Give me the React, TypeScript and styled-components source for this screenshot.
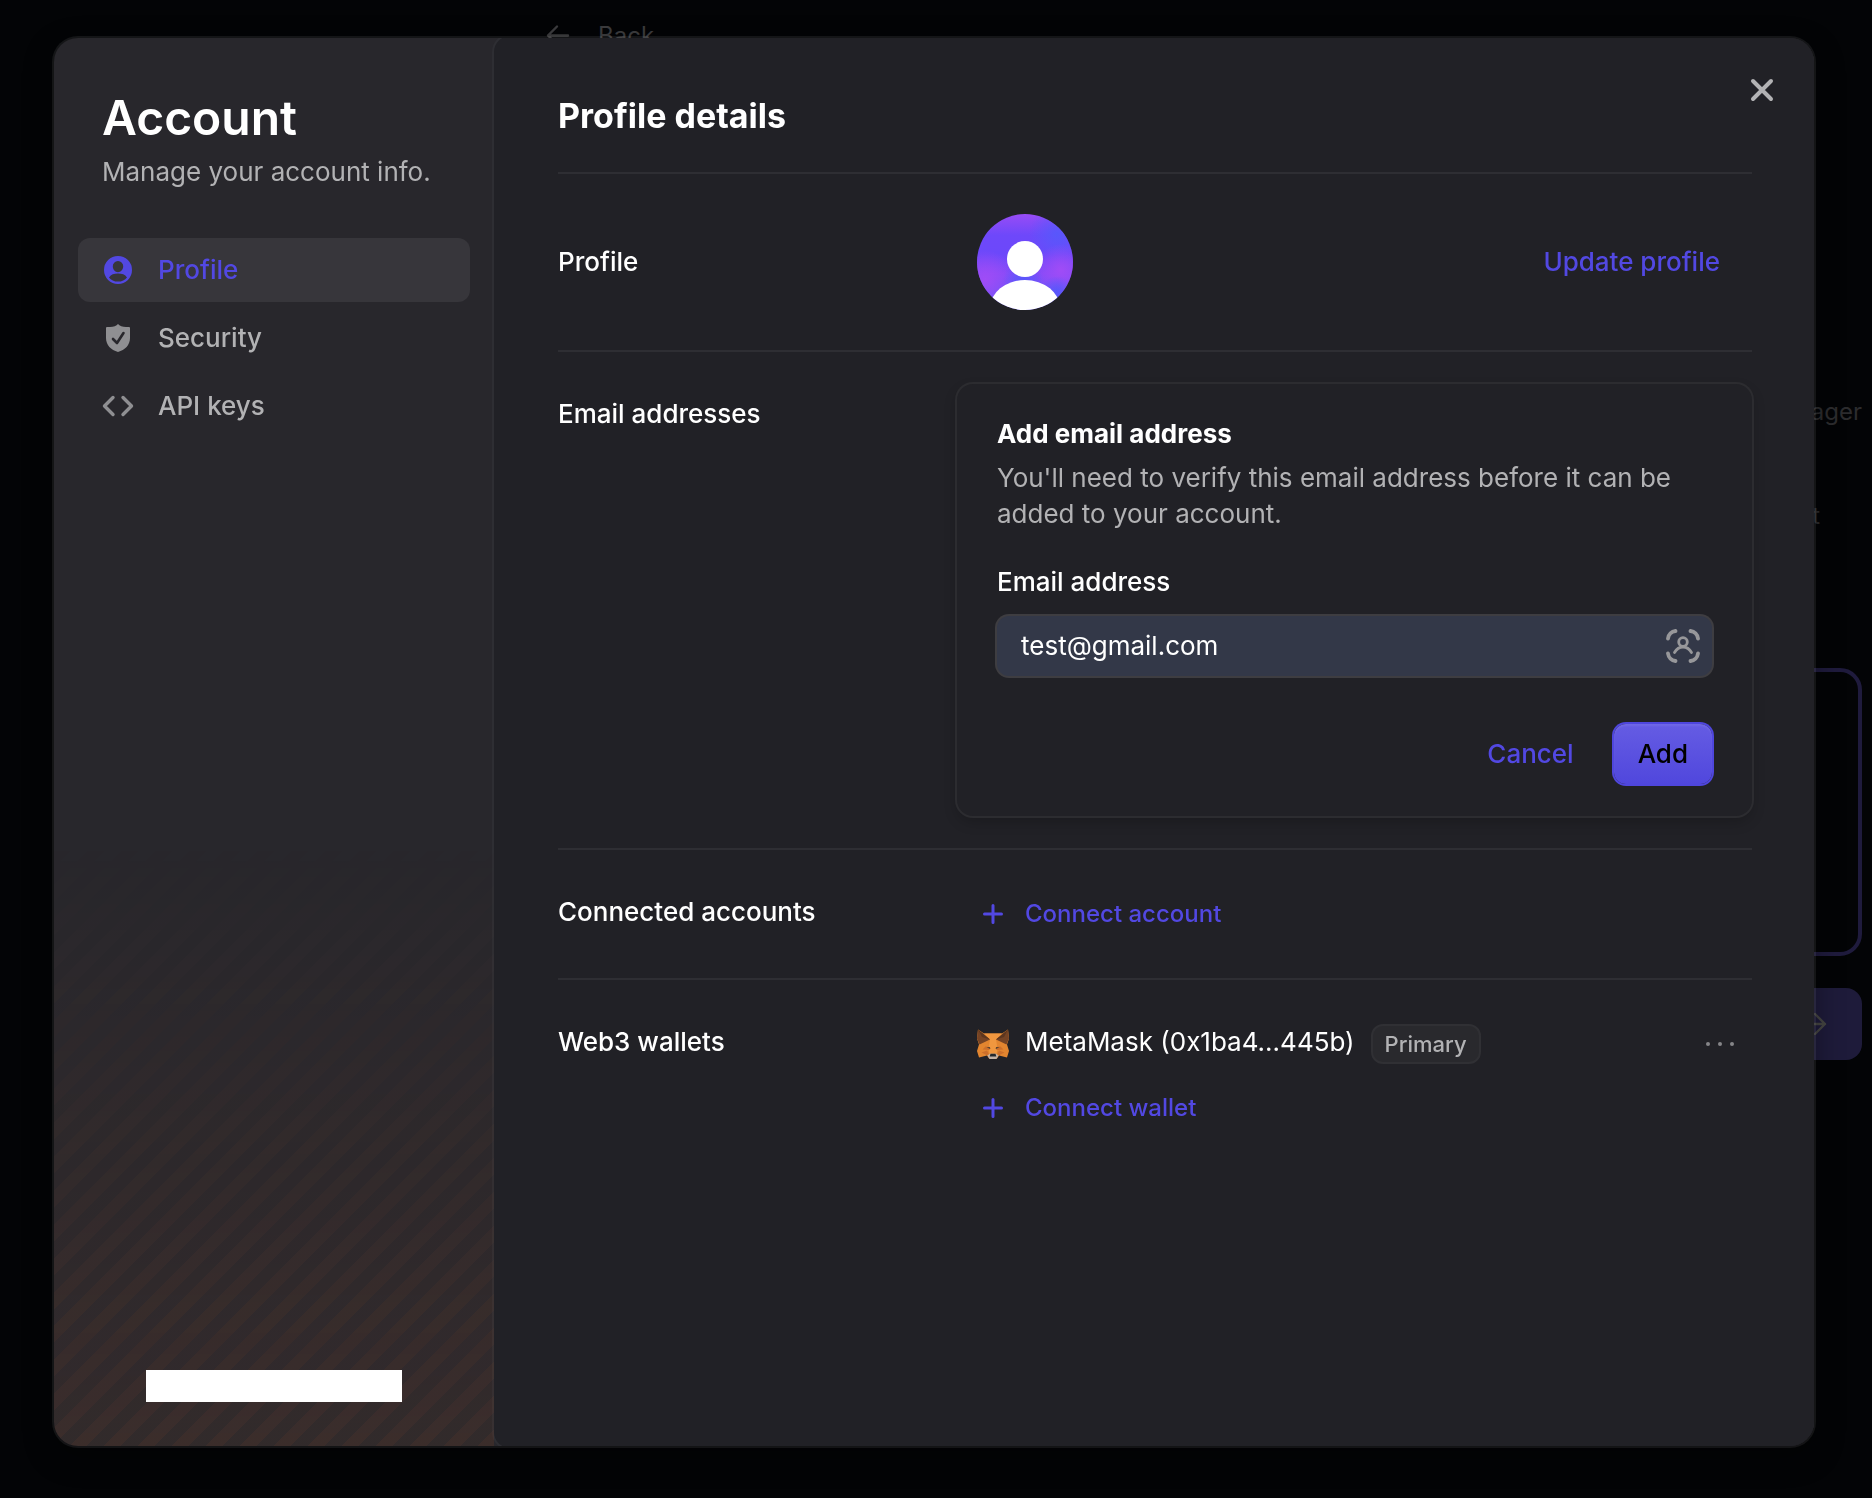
import React from "react";
import styled, { createGlobalStyle } from "styled-components";

const accent = "#5248e2";
const surface = "#212126";
const hairline = "#2e2e33";
const muted = "#b2b2b4";

const GlobalStyle = createGlobalStyle`
  *, *::before, *::after { box-sizing: border-box; }
  body {
    margin: 0;
    background: #030406;
    color: #ffffff;
    font-family: Inter, "Liberation Sans", sans-serif;
    font-optical-sizing: none;
    font-size: 26px;
    line-height: 36px;
  }
  button, input { font: inherit; }
  h1, h2, h3, p { margin: 0; }
`;

/* ---------- dimmed page behind the dialog ---------- */

const Page = styled.main`
  display: flex;
  flex-direction: column;
  min-height: 100vh;
  padding: 18px 10px 0 544px;
  color: #2c2c2e;
  overflow: hidden;
`;

const BackLink = styled.a`
  display: flex;
  align-items: center;
  gap: 26px;
  height: 36px;
  color: #3c3c3e;
  font-size: 24px;
  text-decoration: none;
`;

const PageHeading = styled.p`
  margin-top: 340px;
  font-size: 24px;
  text-align: right;
`;

const PageNote = styled.p`
  margin-top: 68px;
  padding-right: 42px;
  font-size: 24px;
  text-align: right;
`;

const Prompt = styled.textarea`
  height: 288px;
  margin-top: 134px;
  border: 4px solid #1f1b3d;
  border-radius: 22px;
  background: transparent;
  resize: none;
`;

const Send = styled.button`
  display: flex;
  align-items: center;
  justify-content: center;
  align-self: flex-end;
  width: 96px;
  height: 72px;
  margin-top: 32px;
  border: 0;
  border-radius: 16px;
  background: #1e1b3a;
  color: #454542;
`;

/* ---------- dialog shell ---------- */

const Overlay = styled.div`
  position: fixed;
  inset: 0;
  display: flex;
  padding: 38px 58px 52px 54px;
`;

const Dialog = styled.section`
  position: relative;
  display: flex;
  flex: 1;
  min-width: 0;
  border-radius: 24px;
  background: #28272c;
  box-shadow: 0 0 0 2px rgba(255, 255, 255, 0.07), 0 10px 30px rgba(0, 0, 0, 0.4);
`;

const Sidebar = styled.aside`
  position: relative;
  display: flex;
  flex: 0 0 440px;
  flex-direction: column;
  align-items: stretch;
  padding: 48px 24px 44px;
  border-radius: 24px 0 0 24px;
  overflow: hidden;

  &::before {
    content: "";
    position: absolute;
    inset: auto 0 0;
    height: 640px;
    background: repeating-linear-gradient(
      -45deg,
      rgba(243, 107, 38, 0.095),
      rgba(243, 107, 38, 0.095) 12px,
      rgba(243, 107, 38, 0.05) 12px,
      rgba(243, 107, 38, 0.05) 24px
    );
    mask-image: linear-gradient(transparent 5%, #000);
  }
`;

const SidebarTitle = styled.h1`
  padding: 0 24px;
  font-size: 48px;
  font-weight: 600;
  line-height: 64px;
`;

const SidebarText = styled.p`
  margin-top: 4px;
  padding: 0 24px;
  color: ${muted};
`;

const Nav = styled.nav`
  display: flex;
  flex-direction: column;
  gap: 4px;
  margin-top: 48px;
`;

const NavButton = styled.button<{ $active?: boolean }>`
  display: flex;
  align-items: center;
  gap: 24px;
  height: 64px;
  padding: 0 24px;
  border: 0;
  border-radius: 12px;
  background: ${(p) => (p.$active ? "#37363b" : "transparent")};
  color: ${(p) => (p.$active ? accent : muted)};
  font-weight: 500;

  svg { opacity: ${(p) => (p.$active ? 1 : 0.75)}; }
`;

const Redacted = styled.div`
  position: relative;
  align-self: center;
  width: 256px;
  height: 32px;
  margin-top: auto;
  background: #ffffff;
`;

const PanelClip = styled.div`
  display: flex;
  flex: 1;
  min-width: 0;
  margin-left: -2px;
  padding-left: 2px;
  border-radius: 0 24px 24px 0;
  overflow: hidden;
`;

const Panel = styled.div`
  flex: 1;
  min-width: 0;
  margin: -2px 0;
  padding: 56px 62px 40px 64px;
  border-radius: 16px 0 0 16px;
  background: ${surface};
  box-shadow: 0 0 0 2px ${hairline};
`;

const PanelTitle = styled.h2`
  padding-bottom: 32px;
  font-size: 34px;
  font-weight: 700;
  line-height: 48px;
`;

const CloseButton = styled.button`
  position: absolute;
  top: 20px;
  right: 20px;
  display: flex;
  align-items: center;
  justify-content: center;
  width: 64px;
  height: 64px;
  padding: 0;
  border: 0;
  background: transparent;
  color: ${muted};
`;

/* ---------- settings rows ---------- */

const Row = styled.section<{ $roomy?: boolean }>`
  display: grid;
  grid-template-columns: 399px minmax(0, 1fr);
  align-items: ${(p) => (p.$roomy ? "center" : "start")};
  padding: ${(p) => (p.$roomy ? "40px" : "32px")} 0;
  border-top: 2px solid ${hairline};
`;

const RowLabel = styled.h3<{ $centered?: boolean }>`
  padding-top: ${(p) => (p.$centered ? "0" : "12px")};
  font-size: 26px;
  font-weight: 500;
`;

const RowBody = styled.div`
  display: flex;
  flex-direction: column;
  padding-left: 20px;
`;

const ProfileLine = styled.div`
  display: flex;
  align-items: center;
  justify-content: space-between;
`;

const TextButton = styled.button`
  height: 60px;
  padding: 0 32px;
  border: 0;
  background: transparent;
  color: ${accent};
  font-weight: 500;
`;

const ConnectButton = styled.button`
  display: flex;
  align-items: center;
  align-self: flex-start;
  gap: 16px;
  height: 64px;
  padding: 0;
  border: 0;
  background: transparent;
  color: ${accent};
  font-size: 24px;
  font-weight: 500;
`;

const Card = styled.form`
  display: flex;
  flex-direction: column;
  padding: 32px 40px;
  border-radius: 16px;
  background: ${surface};
  box-shadow: 0 0 0 2px #2c2c30, 0 6px 14px rgba(0, 0, 0, 0.2);
`;

const CardTitle = styled.h3`
  font-size: 26px;
  font-weight: 700;
`;

const CardText = styled.p`
  margin-top: 8px;
  color: ${muted};
`;

const FieldLabel = styled.label`
  margin-top: 32px;
  font-weight: 500;
`;

const Field = styled.div`
  display: flex;
  align-items: center;
  height: 60px;
  margin-top: 16px;
  padding: 0 12px 0 24px;
  border-radius: 12px;
  background: #333848;
  color: #97979a;
  box-shadow: 0 0 0 2px #3e3d41;
`;

const FieldInput = styled.input`
  flex: 1;
  min-width: 0;
  padding: 0;
  border: 0;
  outline: 0;
  background: transparent;
  color: #ffffff;
`;

const Actions = styled.div`
  display: flex;
  justify-content: flex-end;
  gap: 8px;
  margin-top: 48px;
`;

const PrimaryButton = styled.button`
  height: 60px;
  padding: 0 24px;
  border: 0;
  border-radius: 12px;
  background: linear-gradient(#655ce3, #5047dd);
  box-shadow: 0 0 0 2px #4f46dd, inset 0 2px 2px rgba(255, 255, 255, 0.08);
  color: #000000;
  font-weight: 500;
`;

const WalletLine = styled.div`
  display: flex;
  align-items: flex-start;
  gap: 16px;
  height: 64px;
  padding-top: 12px;
`;

const WalletIcon = styled.span`
  display: flex;
  align-items: center;
  height: 40px;
`;

const Badge = styled.span`
  padding: 0 12px;
  border: 2px solid #303034;
  border-radius: 12px;
  background: #29292d;
  color: ${muted};
  font-size: 22px;
  font-weight: 500;
`;

const MoreButton = styled.button`
  display: flex;
  align-items: center;
  justify-content: center;
  width: 64px;
  height: 40px;
  margin-left: auto;
  padding: 0;
  border: 0;
  background: transparent;
  color: #858588;
`;

/* ---------- icons ---------- */

const PersonIcon = () => (
  <svg width="32" height="32" viewBox="0 0 32 32" fill="currentColor" aria-hidden="true">
    <path
      fillRule="evenodd"
      d="M16 2a14 14 0 1 0 0 28 14 14 0 0 0 0-28Zm0 5a5.2 5.2 0 0 1 5.2 5.6c-.2 3.2-2.4 5.6-5.2 5.6s-5-2.400-5.200-5.600A5.200 5.200 0 0 1 16 7Zm0 20.600c-3.800 0-7-1.500-9-4.200C9 20.500 12 19.500 16 19.500s7 1 9 3.900c-2 2.700-5.200 4.200-9 4.200Z"
    />
  </svg>
);

const ShieldIcon = () => (
  <svg width="32" height="32" viewBox="0 0 32 32" aria-hidden="true">
    <path
      fill="currentColor"
      d="M16 2c1.500 1.700 4.500 3 8 3h3a1 1 0 0 1 1 1v10c0 7-5 12-12 14C9 28 4 23 4 16V6a1 1 0 0 1 1-1h3c3.500 0 6.500-1.300 8-3Z"
    />
    <path
      d="m11 17 4 4 6.500-10"
      fill="none"
      stroke="#28272c"
      strokeWidth="2.600"
      strokeLinecap="round"
      strokeLinejoin="round"
    />
  </svg>
);

const CodeIcon = () => (
  <svg width="32" height="32" viewBox="0 0 32 32" fill="none" stroke="currentColor" strokeWidth="3.400" strokeLinecap="round" strokeLinejoin="round" aria-hidden="true">
    <path d="m11 7.500-8.500 8.500 8.500 8.500M21 7.500l8.500 8.500-8.500 8.500" />
  </svg>
);

const CloseIcon = () => (
  <svg width="24" height="24" viewBox="0 0 24 24" fill="none" stroke="currentColor" strokeWidth="4" strokeLinecap="round" aria-hidden="true">
    <path d="m3 3 18 18M21 3 3 21" />
  </svg>
);

const PlusIcon = () => (
  <svg width="32" height="32" viewBox="0 0 32 32" fill="none" stroke="currentColor" strokeWidth="3" strokeLinecap="round" aria-hidden="true">
    <path d="M16 7.500v17M7.500 16h17" />
  </svg>
);

const AutofillIcon = () => (
  <svg width="34" height="34" viewBox="0 0 34 34" fill="none" stroke="currentColor" strokeLinecap="round" aria-hidden="true">
    <path
      strokeWidth="3.800"
      d="M2 9.500C2.500 5.500 5.500 2.500 9.500 2M24.500 2c4 .5 7 3.500 7.500 7.500M32 24.500c-.5 4-3.500 7-7.500 7.500M9.500 32c-4-.5-7-3.500-7.500-7.500"
    />
    <circle cx="17" cy="13" r="4.300" strokeWidth="2.800" />
    <path strokeWidth="2.800" d="M8.500 23.500c2-3.500 5-5.500 8.500-5.500s6.500 2 8.500 5.500" />
  </svg>
);

const DotsIcon = () => (
  <svg width="32" height="8" viewBox="0 0 32 8" fill="currentColor" aria-hidden="true">
    <circle cx="4" cy="4" r="2" />
    <circle cx="16" cy="4" r="2" />
    <circle cx="28" cy="4" r="2" />
  </svg>
);

const ArrowLeftIcon = () => (
  <svg width="28" height="28" viewBox="0 0 28 28" fill="none" stroke="currentColor" strokeWidth="2.400" strokeLinecap="round" strokeLinejoin="round" aria-hidden="true">
    <path d="M24 13.500H4M13 4.500l-9 9 9 9" />
  </svg>
);

const ArrowRightIcon = () => (
  <svg width="28" height="28" viewBox="0 0 28 28" fill="none" stroke="currentColor" strokeWidth="2.400" strokeLinecap="round" strokeLinejoin="round" aria-hidden="true">
    <path d="M3 14h22M15 4l10 10-10 10" />
  </svg>
);

const Avatar = () => (
  <svg width="96" height="96" viewBox="0 0 96 96" role="img" aria-label="Profile picture">
    <defs>
      <clipPath id="avatar-clip">
        <circle cx="48" cy="48" r="48" />
      </clipPath>
      <linearGradient id="avatar-base" x1="0" y1="0" x2="0" y2="1">
        <stop offset="0" stopColor="#984cf6" />
        <stop offset="0.220" stopColor="#6e48fa" />
        <stop offset="0.420" stopColor="#6c48fa" />
        <stop offset="0.620" stopColor="#864bf8" />
        <stop offset="0.850" stopColor="#6a55f8" />
      </linearGradient>
      <radialGradient id="avatar-blue">
        <stop offset="0" stopColor="#5857fb" />
        <stop offset="1" stopColor="#5857fb" stopOpacity="0" />
      </radialGradient>
      <radialGradient id="avatar-violet">
        <stop offset="0" stopColor="#a04cf6" />
        <stop offset="1" stopColor="#a04cf6" stopOpacity="0" />
      </radialGradient>
    </defs>
    <g clipPath="url(#avatar-clip)">
      <rect width="96" height="96" fill="url(#avatar-base)" />
      <circle cx="80" cy="20" r="28" fill="url(#avatar-blue)" />
      <circle cx="84" cy="56" r="26" fill="url(#avatar-violet)" />
      <circle cx="8" cy="66" r="30" fill="url(#avatar-violet)" />
      <circle cx="46" cy="66" r="20" fill="url(#avatar-blue)" />
      <circle cx="80" cy="78" r="16" fill="url(#avatar-blue)" />
      <circle cx="48" cy="45" r="18" fill="#ffffff" />
      <ellipse cx="48" cy="94" rx="35" ry="28" fill="#ffffff" />
    </g>
  </svg>
);

const FoxIcon = () => (
  <svg width="32" height="32" viewBox="0 0 32 32" role="img" aria-label="MetaMask">
    <path fill="#e2852f" d="M1 1.500 7 5.500h18l6-4 1 9-2 6 2 6.500-2 6.500-8-2-2 3h-8l-2-3-8 2L0 23l2-6.500-2-6Z" />
    <path fill="#f0973f" d="M7 5.500h18L19 11.500l1.500 9-1 6h-7l-1-6 1.500-9Z" />
    <path fill="#754324" d="M1 1.500 13 11.500 2.500 16.500 0 10.500ZM31 1.500 19 11.500l10.500 5 2.500-6Z" />
    <path fill="#5c361f" d="M1 1.500 13 11.500 5 9ZM31 1.500 19 11.500 27 9Z" />
    <path fill="#cc6f2b" d="m8.500 18.500 4.500.5-.5 3-7-.5ZM23.500 18.500l-4.500.5.500 3 7-.5ZM10 22.500l2 4-2.500.5-5-2.500ZM22 22.500l-2 4 2.500.5 5-2.500Z" />
    <path fill="#3a3532" d="m9.500 19.200 3.500 0 .3 1.800ZM22.500 19.200l-3.500 0-.3 1.800Z" />
    <path fill="#c3b3a6" d="m10.500 27.500 2.500-1.700h6l2.500 1.700-2 3.500h-7Z" />
    <path fill="#23282d" d="M13.500 25.800h5l.8 2.700h-6.600Z" />
  </svg>
);

export default function App() {
  return (
    <>
      <GlobalStyle />
      <Page>
        <BackLink href="#back">
          <ArrowLeftIcon />
          Back
        </BackLink>
        <PageHeading>Manager</PageHeading>
        <PageNote>Agent</PageNote>
        <Prompt aria-label="Message" />
        <Send aria-label="Send">
          <ArrowRightIcon />
        </Send>
      </Page>
      <Overlay>
        <Dialog role="dialog" aria-label="Account">
          <Sidebar>
            <SidebarTitle>Account</SidebarTitle>
            <SidebarText>Manage your account info.</SidebarText>
            <Nav>
              <NavButton $active>
                <PersonIcon />
                Profile
              </NavButton>
              <NavButton>
                <ShieldIcon />
                Security
              </NavButton>
              <NavButton>
                <CodeIcon />
                API keys
              </NavButton>
            </Nav>
            <Redacted />
          </Sidebar>
          <PanelClip>
            <Panel>
              <PanelTitle>Profile details</PanelTitle>
              <Row $roomy>
                <RowLabel $centered>Profile</RowLabel>
                <RowBody>
                  <ProfileLine>
                    <Avatar />
                    <TextButton>Update profile</TextButton>
                  </ProfileLine>
                </RowBody>
              </Row>
              <Row>
                <RowLabel>Email addresses</RowLabel>
                <Card onSubmit={(e) => e.preventDefault()}>
                  <CardTitle>Add email address</CardTitle>
                  <CardText>
                    You'll need to verify this email address before it can be added to your account.
                  </CardText>
                  <FieldLabel htmlFor="email">Email address</FieldLabel>
                  <Field>
                    <FieldInput id="email" type="email" defaultValue="test@gmail.com" />
                    <AutofillIcon />
                  </Field>
                  <Actions>
                    <TextButton type="button">Cancel</TextButton>
                    <PrimaryButton type="submit">Add</PrimaryButton>
                  </Actions>
                </Card>
              </Row>
              <Row>
                <RowLabel>Connected accounts</RowLabel>
                <RowBody>
                  <ConnectButton>
                    <PlusIcon />
                    Connect account
                  </ConnectButton>
                </RowBody>
              </Row>
              <Row>
                <RowLabel>Web3 wallets</RowLabel>
                <RowBody>
                  <WalletLine>
                    <WalletIcon>
                      <FoxIcon />
                    </WalletIcon>
                    <span>MetaMask (0x1ba4...445b)</span>
                    <Badge>Primary</Badge>
                    <MoreButton aria-label="Wallet options">
                      <DotsIcon />
                    </MoreButton>
                  </WalletLine>
                  <ConnectButton>
                    <PlusIcon />
                    Connect wallet
                  </ConnectButton>
                </RowBody>
              </Row>
            </Panel>
          </PanelClip>
          <CloseButton aria-label="Close">
            <CloseIcon />
          </CloseButton>
        </Dialog>
      </Overlay>
    </>
  );
}
